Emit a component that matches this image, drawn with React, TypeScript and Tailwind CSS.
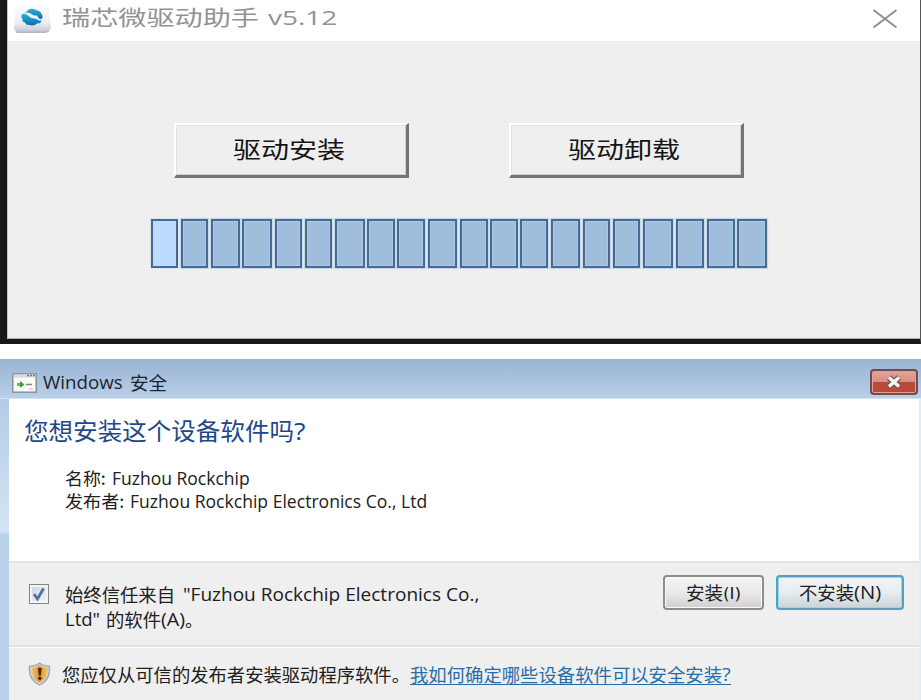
import React, { useLayoutEffect, useRef, useState } from "react";

/* A line of text squeezed or stretched horizontally to an exact width. */
function Fit({ width, className = "", children }: { width: number; className?: string; children: React.ReactNode }) {
  const ref = useRef<HTMLSpanElement>(null);
  const [scale, setScale] = useState(1);
  useLayoutEffect(() => {
    if (ref.current) setScale(width / ref.current.offsetWidth);
  }, [width]);
  return (
    <span className="inline-flex shrink-0" style={{ width }}>
      <span
        ref={ref}
        className={`inline-block shrink-0 origin-left whitespace-nowrap ${className}`}
        style={{ transform: `scaleX(${scale})` }}
      >
        {children}
      </span>
    </span>
  );
}

function AppIcon() {
  return (
    <svg className="block" width="38" height="34" viewBox="0 0 38 34">
      <defs>
        <linearGradient id="tile" x1="0" y1="0" x2="0" y2="1">
          <stop offset="0" stopColor="#fff" />
          <stop offset=".7" stopColor="#eeeef6" />
          <stop offset="1" stopColor="#c4c5d3" />
        </linearGradient>
        <linearGradient id="swirl" x1="0" y1="0" x2="0" y2="1">
          <stop offset="0" stopColor="#2ab5dc" />
          <stop offset="1" stopColor="#1168b5" />
        </linearGradient>
      </defs>
      <path d="M2 1H34L37 28L34 32H3L0 29Z" fill="url(#tile)" />
      <path d="M1 31.500Q2 33.300 6 33H31Q34 33 36 29.500L31 31.500Z" fill="#b4b5c2" />
      <path d="M10 13Q13 12 14 10Q18 7.500 22 10Q27 11 27.500 14Q29 15.500 28.500 18Q27 19.500 25 18.500L23 15.500Q20 16 17.500 14Q14 11.500 10 13Z" fill="url(#swirl)" />
      <path d="M7.500 14.500Q11 12.500 14 15.500Q17 19 21 18.500L24 20Q26 21 27.500 20Q27 24 23 23.500Q20 26.500 16 25Q12 25.500 11 22.500Q8 22 8.500 19Q6.500 17 7.500 14.500Z" fill="url(#swirl)" />
    </svg>
  );
}

function ClassicButton({ children }: { children: string }) {
  return (
    <button className="flex h-[55px] w-[235px] items-center justify-center border-t-2 border-r-[3px] border-b-[3px] border-l-2 border-t-white border-r-[#737373] border-b-[#737373] border-l-white bg-[#efefef] pr-[4px] pb-[5px] text-[#151515] shadow-[inset_1px_1px_0_#e2e2e2,inset_-1px_-1px_0_#cfcfcf]">
      <Fit width={112} className="text-[23px] leading-7">{children}</Fit>
    </button>
  );
}

/* Width of each progress block and the gap that follows it. */
const blocks = [
  [27, 3], [27, 3], [29, 2], [30, 3], [27, 3], [27, 3], [30, 2], [28, 2], [28, 3], [29, 3],
  [28, 2], [28, 2], [28, 3], [29, 3], [27, 3], [27, 3], [30, 3], [28, 3], [28, 2], [30, 0],
];

function DriverWindow() {
  return (
    <section className="h-[344px] border-r border-b-[5px] border-l-[7px] border-r-[#555] border-b-[#191919] border-l-[#191919]">
      <div className="flex h-[339px] flex-col border-b border-l border-b-[#aaa] border-l-[#c4c4c4] bg-[#efefef]">
        <header className="flex h-[41px] shrink-0 items-start bg-white pl-[6px] text-[#929292]">
          <AppIcon />
          <div className="flex gap-[9px] pt-[3px] pl-[10px] text-[21px] leading-7">
            <Fit width={197} className="-mt-[1px]">瑞芯微驱动助手</Fit>
            <Fit width={70} className="mt-[1px] font-['Open_Sans'] text-[20px]">v5.12</Fit>
          </div>
          <svg className="mt-[9px] mr-[22px] ml-auto" width="26" height="20" viewBox="0 0 26 20">
            <path d="M1.500 1L24.500 18.500M24.500 1L1.500 18.500" fill="none" stroke="#8f8f8f" strokeWidth="2" />
          </svg>
        </header>
        <div className="flex gap-[100px] pt-[82px] pl-[166px]">
          <ClassicButton>驱动安装</ClassicButton>
          <ClassicButton>驱动卸载</ClassicButton>
        </div>
        <div className="mt-[41px] ml-[143px] flex h-[49px]">
          {blocks.map(([width, gap], i) => (
            <div
              key={i}
              style={{ width, marginRight: gap }}
              className={
                i === 0
                  ? "shrink-0 border-2 border-[#456a98] bg-[#bbdcff] shadow-[0_0_1px_1px_#dce6ef]"
                  : "shrink-0 border-2 border-[#456a98] bg-[#a0bddc] shadow-[0_0_1px_1px_#cbd9e7,inset_0_0_1px_1px_#a9cae9]"
              }
            />
          ))}
        </div>
      </div>
    </section>
  );
}

function SetupIcon() {
  return (
    <svg width="25" height="20" viewBox="0 0 25 20">
      <rect x=".8" y=".8" width="23.400" height="18.400" fill="#fafafa" stroke="#8d9199" strokeWidth="1.500" />
      <path d="M2 3H23" stroke="#d5d9df" strokeWidth="3" />
      <path d="M15 2.500h2m1 0h2m1 0h2" stroke="#697381" strokeWidth="1.300" />
      <path d="M5 11.500H9" stroke="#68b75f" strokeWidth="3" />
      <path d="M8 8L12.500 11.500L8 15Z" fill="#409e40" />
      <path d="M14 11.500H20" stroke="#858585" strokeWidth="1.500" />
      <path d="M17 16H21" stroke="#bbb" />
    </svg>
  );
}

function ShieldIcon() {
  return (
    <svg width="23" height="24" viewBox="0 0 23 24">
      <defs>
        <linearGradient id="gold" x1="0" x2="1">
          <stop offset="0" stopColor="#edc880" />
          <stop offset=".5" stopColor="#e0902c" />
          <stop offset="1" stopColor="#f3c668" />
        </linearGradient>
      </defs>
      <path d="M11.500 1Q15 4 21.500 4Q23 18 11.500 23Q0 18 1.500 4Q8 4 11.500 1Z" fill="#d2d1ce" stroke="#a4a5a8" strokeWidth="1.200" />
      <path d="M11.500 3.500Q15 6 19.500 6Q20 16 11.500 20.500Q3 16 3.500 6Q8 6 11.500 3.500Z" fill="url(#gold)" />
      <path d="M10 6H13.700L12.800 13.500H10.800Z" fill="#4b260b" />
      <circle cx="11.800" cy="16.300" r="1.700" fill="#4b260b" />
    </svg>
  );
}

const latin = "font-['Open_Sans']";

function SecurityWindow() {
  return (
    <section className="flex h-[341px] flex-col rounded-tl-[3px] bg-[#b9d0e9]">
      <header className="flex h-[40px] shrink-0 items-start border-b border-[#d6e4f2] bg-linear-to-b from-[#98b4d2] to-[#b9d0e9] pl-[12px] text-[#1b2430]">
        <div className="pt-[14px]"><SetupIcon /></div>
        <div className="flex gap-[7px] pt-[11px] pl-[6px] text-[18px] leading-6">
          <Fit width={80} className={`${latin} text-[18px]`}>Windows</Fit>
          <Fit width={37}>安全</Fit>
        </div>
        <button className="mt-[10px] mr-[3px] ml-auto flex h-[26px] w-[48px] items-center justify-center rounded-[4px] border-2 border-[#6f4c54] bg-linear-to-b from-[#e3a49a] from-0% via-[#da8c80] via-50% to-[#b94a3a] to-51% shadow-[inset_0_0_0_1px_#e4a095]">
          <svg width="20" height="16" viewBox="0 0 20 16">
            <path d="M5 3.500L15 12.500M15 3.500L5 12.500" fill="none" stroke="#6d5658" strokeWidth="6" />
            <path d="M5 3.500L15 12.500M15 3.500L5 12.500" fill="none" stroke="#f5f5f5" strokeWidth="3.500" />
          </svg>
        </button>
      </header>
      <div className="flex min-h-0 flex-1">
        <div className="w-[9px] shrink-0 bg-linear-to-b from-[#b4cce7] from-0% via-[#d5e4f4] via-44% to-[#b9d0e9] to-45%" />
        <div className="flex flex-1 flex-col border-r-2 border-[#e2edf8] bg-[#efefef] text-[18px] text-[#202020]">
          <div className="h-[164px] shrink-0 border-b-2 border-[#e3e3e3] bg-white pl-[15px]">
            <h1 className="pt-[15px] text-[24px] leading-8 text-[#1e4888]">
              <Fit width={270}>您想安装这个设备软件吗</Fit>
              <Fit width={11} className={`${latin} text-[24px]`}>?</Fit>
            </h1>
            <div className="pt-[19px] pl-[41px] text-[17.5px] leading-[23px]">
              <p className="flex h-[23px] gap-[6px]">
                <Fit width={41}>名称:</Fit>
                <Fit width={138} className={`${latin} mt-[1px] leading-[22px]`}>Fuzhou Rockchip</Fit>
              </p>
              <p className="flex h-[23px] gap-[6px]">
                <Fit width={59}>发布者:</Fit>
                <Fit width={297} className={`${latin} mt-[1px] leading-[22px]`}>Fuzhou Rockchip Electronics Co., Ltd</Fit>
              </p>
            </div>
          </div>
          <div className="flex h-[84px] shrink-0 items-start border-b-2 border-[#e1e1e1] pl-[20px] shadow-[0_1px_0_#fff]">
            <div className="mt-[21px] flex h-5 w-5 shrink-0 items-center justify-center border border-[#858585] bg-linear-to-br from-[#ccd3df] to-[#f5f7fa] shadow-[inset_0_0_0_2px_#f4f4f4]">
              <svg width="14" height="15" viewBox="0 0 14 15">
                <path d="M2 7L5.500 12L11.500 1.500" fill="none" stroke="#4f6ca6" strokeWidth="2.700" />
              </svg>
            </div>
            <div className="pt-[19px] pl-[16px] leading-[25px]">
              <p className="flex h-[25px] gap-[8px]">
                <Fit width={110}>始终信任来自</Fit>
                <Fit width={296} className={latin}>"Fuzhou Rockchip Electronics Co.,</Fit>
              </p>
              <p className="flex h-[25px]">
                <Fit width={35} className={latin}>Ltd"</Fit>
                <span className="w-[6px]" />
                <Fit width={55}>的软件</Fit>
                <Fit width={24} className={latin}>(A)</Fit>
                <Fit width={18}>。</Fit>
              </p>
            </div>
            <div className="mt-[12px] mr-[15px] ml-auto flex gap-[12px]">
              <button className="flex h-[35px] w-[101px] items-center justify-center rounded-[4px] border-2 border-[#8d8d8d] bg-linear-to-b from-[#f3f3f3] from-0% via-[#ebebeb] via-48% to-[#d0d0d0] shadow-[inset_0_0_0_1px_#fafafa]">
                <Fit width={37}>安装</Fit>
                <Fit width={18} className="pt-[2px] font-['DejaVu_Sans'] text-[16px]">(I)</Fit>
              </button>
              <button className="flex h-[35px] w-[128px] items-center justify-center rounded-[4px] border-2 border-[#569fbf] bg-linear-to-b from-[#f1f4f5] from-0% via-[#e9edef] via-48% to-[#cbd3d6] shadow-[inset_0_0_0_1px_#91d9f0]">
                <Fit width={55}>不安装</Fit>
                <Fit width={27} className={latin}>(N)</Fit>
              </button>
            </div>
          </div>
          <div className="flex items-start pt-[15px] pl-[19px] text-[18px] leading-6">
            <ShieldIcon />
            <span className="w-[11px]" />
            <Fit width={348}>您应仅从可信的发布者安装驱动程序软件。</Fit>
            <a className="flex h-[23px] border-b-[1.5px] border-[#286da7] text-[#286da7]">
              <Fit width={312}>我如何确定哪些设备软件可以安全安装</Fit>
              <Fit width={9} className={latin}>?</Fit>
            </a>
          </div>
        </div>
      </div>
    </section>
  );
}

export default function App() {
  return (
    <main className="flex h-[700px] w-[921px] flex-col gap-[15px] overflow-hidden bg-white font-['Noto_Sans_CJK_SC',sans-serif]">
      <DriverWindow />
      <SecurityWindow />
    </main>
  );
}
